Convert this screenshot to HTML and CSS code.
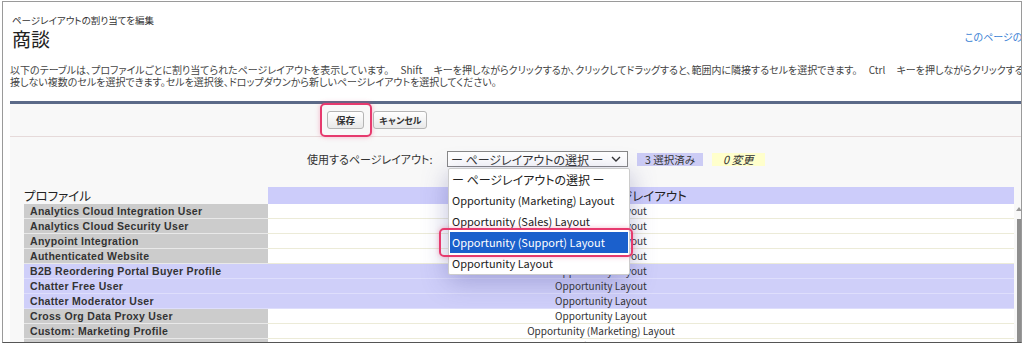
FILE: index.html
```html
<!DOCTYPE html>
<html lang="ja">
<head>
    <meta charset="UTF-8">
    <title>ページレイアウトの割り当てを編集 - 商談</title>
    <link rel="stylesheet" href="styles.css">
</head>
<body>

<div class="frame">
    <div class="page-head">
        <div>
            <div class="subtitle">ページレイアウトの割り当てを編集</div>
            <h1>商談</h1>
        </div>
        <a class="help" href="#">このページのヘルプ</a>
    </div>

    <p class="desc">以下のテーブルは、プロファイルごとに割り当てられたページレイアウトを表示しています。 Shift キーを押しながらクリックするか、クリックしてドラッグすると、範囲内に隣接するセルを選択できます。 Ctrl キーを押しながらクリックすると、隣<br>接しない複数のセルを選択できます。セルを選択後、ドロップダウンから新しいページレイアウトを選択してください。</p>

    <div class="panel">
        <div class="btn-row">
            <button class="btn marked">保存</button>
            <button class="btn cancel">キャンセル</button>
        </div>

        <div class="pick-row">
            <label>使用するページレイアウト:</label>
            <div class="select-wrap">
                <div class="select">
                    <span>ー ページレイアウトの選択 ー</span>
                    <svg width="10" height="6" viewBox="0 0 10 6"><path d="M1 1l4 4 4-4" fill="none" stroke="#333" stroke-width="1.4"/></svg>
                </div>
                <ul class="dropdown">
                    <li>ー ページレイアウトの選択 ー</li>
                    <li>Opportunity (Marketing) Layout</li>
                    <li>Opportunity (Sales) Layout</li>
                    <li class="active">Opportunity (Support) Layout</li>
                    <li>Opportunity Layout</li>
                </ul>
            </div>
            <span class="count">3 選択済み</span>
            <span class="changed">0 変更</span>
        </div>

        <div class="table-wrap">
            <div class="layouts">
                <div class="profile-head">プロファイル</div>
                <div class="layout-head">ページレイアウト</div>

                <div class="name">Analytics Cloud Integration User</div><div class="layout">Opportunity Layout</div>
                <div class="name">Analytics Cloud Security User</div><div class="layout">Opportunity Layout</div>
                <div class="name">Anypoint Integration</div><div class="layout">Opportunity Layout</div>
                <div class="name">Authenticated Website</div><div class="layout">Opportunity Layout</div>
                <div class="name sel">B2B Reordering Portal Buyer Profile</div><div class="layout sel">Opportunity Layout</div>
                <div class="name sel">Chatter Free User</div><div class="layout sel">Opportunity Layout</div>
                <div class="name sel">Chatter Moderator User</div><div class="layout sel">Opportunity Layout</div>
                <div class="name">Cross Org Data Proxy User</div><div class="layout">Opportunity Layout</div>
                <div class="name">Custom: Marketing Profile</div><div class="layout">Opportunity (Marketing) Layout</div>
                <div class="name">Custom: Sales Profile</div><div class="layout">Opportunity (Sales) Layout</div>
            </div>
            <div class="scrollbar"><span class="arrow"></span><span class="thumb"></span></div>
        </div>
    </div>
</div>

</body>
</html>
```

FILE: styles.css
```css
body {
    margin: 0;
    font-family: "Noto Sans CJK JP", "Liberation Sans", sans-serif;
    font-feature-settings: "palt";
    color: #333;
    background-color: #fff;
}
.frame {
    margin: 1px 2px 0 2px;
    height: 342px;
    border: 1px solid #9a9a9a;
    border-bottom-color: #555;
    box-sizing: border-box;
    overflow: hidden;
    padding-left: 7px;
    background-color: #fff;
}
.page-head {
    display: flex;
    justify-content: space-between;
    align-items: flex-start;
    padding: 12px 0 0 2px;
}
.subtitle {
    font-size: 9.5px;
    color: #333;
    line-height: 13px;
}
h1 {
    margin: 1px 0 0 0;
    font-size: 19px;
    font-weight: normal;
    line-height: 22px;
    color: #222;
}
.help {
    font-size: 10px;
    color: #3a7fd5;
    text-decoration: none;
    margin-top: 15px;
    white-space: nowrap;
    margin-right: -30px;
}
.desc {
    margin: 14px 0 0 0;
    font-size: 10px;
    line-height: 12px;
    white-space: nowrap;
    word-spacing: 9px;
    color: #444;
}
.panel {
    margin-top: 13px;
    border-top: 3px solid #5b6a88;
    background-color: #f8f8f8;
    height: 260px;
}
.btn-row {
    display: flex;
    gap: 9px;
    padding: 7px 0 0 317px;
    height: 25px;
    border-bottom: 1px solid #e6dada;
}
.btn {
    position: relative;
    height: 18px;
    padding: 0 8px;
    font-family: inherit;
    font-size: 9.5px;
    font-weight: bold;
    color: #333;
    background: linear-gradient(#ffffff, #e9e9e9);
    border: 1px solid #b5b5b5;
    border-radius: 3px;
}
.cancel {
    padding: 0 5px;
    font-size: 9px;
    letter-spacing: -0.6px;
}
.marked::after {
    content: "";
    position: absolute;
    left: -8px;
    right: -9px;
    top: -9px;
    bottom: -9px;
    border: 2px solid #e63a6e;
    border-radius: 5px;
    box-shadow: 0 0 5px rgba(230, 58, 110, 0.35);
}
.pick-row {
    display: flex;
    align-items: center;
    padding: 14px 0 0 297px;
    height: 16px;
}
.pick-row label {
    font-size: 11px;
    width: 140px;
}
.select-wrap {
    position: relative;
}
.select {
    width: 181px;
    height: 16px;
    box-sizing: border-box;
    border: 1px solid #888;
    background-color: #fff;
    display: flex;
    align-items: center;
    justify-content: space-between;
    padding: 0 6px 0 3px;
    font-size: 12px;
}
.dropdown {
    position: absolute;
    left: 1px;
    top: 17px;
    width: 180px;
    margin: 0;
    padding: 0;
    list-style: none;
    background-color: #fff;
    border: 1px solid #ccc;
    border-radius: 2px;
    box-shadow: 0 6px 26px rgba(70, 70, 150, 0.35);
    z-index: 5;
}
.dropdown li {
    position: relative;
    height: 21px;
    line-height: 21px;
    padding-left: 3px;
    font-size: 11px;
    color: #222;
    white-space: nowrap;
}
.dropdown li:first-child {
    font-size: 12px;
}
.dropdown li.active {
    background-color: #1b60cc;
    color: #fff;
    margin: 0 1px;
    padding-left: 2px;
}
.dropdown li.active::after {
    content: "";
    position: absolute;
    left: -11px;
    right: -5px;
    top: -4px;
    bottom: -4px;
    border: 2px solid #e63a6e;
    border-radius: 5px;
    box-shadow: 0 0 5px rgba(230, 58, 110, 0.35);
}
.count {
    margin-left: 9px;
    padding: 0 8px;
    font-size: 10.5px;
    background-color: #ccccf5;
    line-height: 13px;
}
.changed {
    margin-left: 9px;
    padding: 0 11px;
    font-size: 11px;
    font-style: italic;
    background-color: #ffffcc;
    line-height: 13px;
}
.table-wrap {
    display: flex;
    margin: 20px 0 0 14px;
}
.layouts {
    display: grid;
    grid-template-columns: 244px 746px;
    grid-template-rows: 17px;
    grid-auto-rows: 15px;
}
.profile-head,
.layout-head {
    font-size: 12.5px;
    line-height: 17px;
    color: #222;
}
.layout-head {
    background-color: #ccccfa;
    text-align: center;
}
.name,
.layout {
    box-sizing: border-box;
    height: 15px;
    line-height: 14px;
    white-space: nowrap;
    overflow: hidden;
}
.name {
    background-color: #cccccc;
    border-bottom: 1px solid #e9e9e9;
    padding-left: 6px;
    font-family: "Liberation Sans", sans-serif;
    font-size: 10.5px;
    font-weight: bold;
    letter-spacing: 0.3px;
    color: #333;
}
.layout {
    background-color: #fff;
    border-bottom: 1px solid #ecebd8;
    text-align: center;
    padding-right: 80px;
    font-size: 10px;
    color: #333;
}
.name.sel,
.layout.sel {
    background-color: #cfcff9;
    border-bottom-color: #dedefc;
}
.scrollbar {
    margin: 20px 0 0 2px;
    width: 6px;
    display: flex;
    flex-direction: column;
    align-items: center;
}
.arrow {
    width: 0;
    height: 0;
    border-left: 3px solid transparent;
    border-right: 3px solid transparent;
    border-bottom: 4px solid #999;
    margin-bottom: 8px;
}
.thumb {
    width: 5px;
    height: 150px;
    background-color: #8e8e8e;
}
```
